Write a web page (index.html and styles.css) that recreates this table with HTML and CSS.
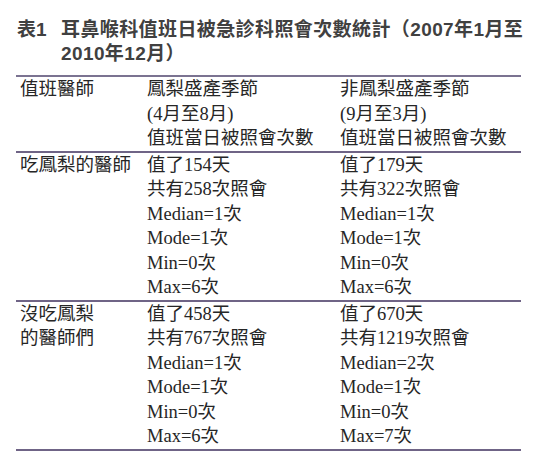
FILE: index.html
```html
<!DOCTYPE html>
<html lang="zh-Hant">
<head>
<meta charset="utf-8">
<link rel="stylesheet" href="styles.css">
</head>
<body>
<div class="page">
  <div class="title">
    <span class="tnum">表1</span>
    <span class="ttext">耳鼻喉科值班日被急診科照會次數統計（2007年1月至<br>2010年12月）</span>
  </div>
  <div class="tbl">
    <div class="group head">
      <div class="cell c1"><div>值班醫師</div></div>
      <div class="cell c2"><div>鳳梨盛產季節</div><div>(4月至8月)</div><div>值班當日被照會次數</div></div>
      <div class="cell c3"><div>非鳳梨盛產季節</div><div>(9月至3月)</div><div>值班當日被照會次數</div></div>
    </div>
    <div class="group">
      <div class="cell c1"><div>吃鳳梨的醫師</div></div>
      <div class="cell c2"><div>值了154天</div><div>共有258次照會</div><div>Median=1次</div><div>Mode=1次</div><div>Min=0次</div><div>Max=6次</div></div>
      <div class="cell c3"><div>值了179天</div><div>共有322次照會</div><div>Median=1次</div><div>Mode=1次</div><div>Min=0次</div><div>Max=6次</div></div>
    </div>
    <div class="group">
      <div class="cell c1"><div>沒吃鳳梨</div><div>的醫師們</div></div>
      <div class="cell c2"><div>值了458天</div><div>共有767次照會</div><div>Median=1次</div><div>Mode=1次</div><div>Min=0次</div><div>Max=6次</div></div>
      <div class="cell c3"><div>值了670天</div><div>共有1219次照會</div><div>Median=2次</div><div>Mode=1次</div><div>Min=0次</div><div>Max=7次</div></div>
    </div>
  </div>
</div>
</body>
</html>
```
FILE: styles.css
```css
html, body {
  margin: 0;
  padding: 0;
  background: #ffffff;
}
.page {
  padding: 18px 0 0 16px;
  width: 505px;
}
.title {
  display: flex;
  font-family: "Liberation Sans", "Noto Sans CJK TC", sans-serif;
  font-weight: bold;
  font-size: 19px;
  letter-spacing: 0.4px;
  line-height: 24px;
  color: #404040;
  height: 48px;
}
.tnum {
  width: 44px;
  flex: none;
  padding-left: 1px;
  letter-spacing: 0;
}
.ttext {
  flex: 1;
  white-space: nowrap;
}
.tbl {
  margin-top: 9px;
  border-top: 2px solid #7b7391;
  border-bottom: 2px solid #6f6486;
  font-family: "Liberation Serif", "Noto Sans CJK TC", serif;
  font-size: 18.5px;
  line-height: 24.5px;
  color: #262626;
}
.group {
  display: grid;
  grid-template-columns: 131px 193px 1fr;
}
.group + .group {
  border-top: 2px solid #6f6486;
}
.cell.c1 {
  padding-left: 4px;
}
```
